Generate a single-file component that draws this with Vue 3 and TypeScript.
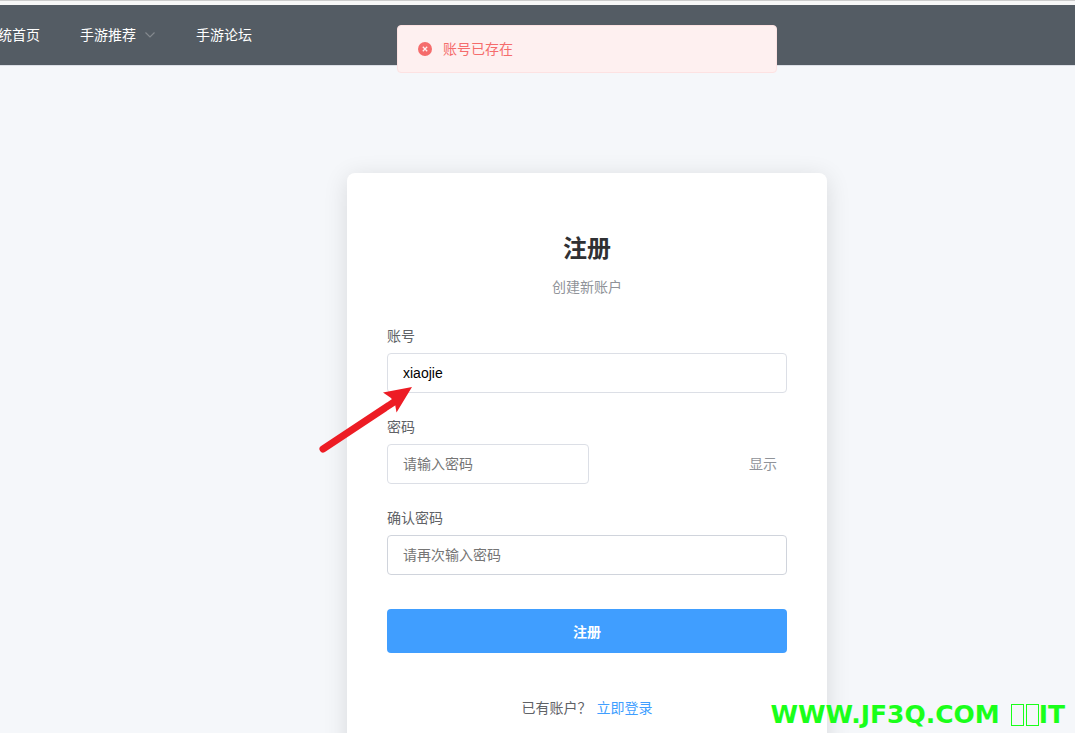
<script setup lang="ts">
import { ref } from 'vue'

const account = ref('xiaojie')
const password = ref('')
const confirmPassword = ref('')
const showPassword = ref(false)
</script>

<template>
  <div class="page">
    <div class="strip"></div>
    <header class="navbar">
      <nav class="menu">
        <a href="#" class="menu-item">统首页</a>
        <a href="#" class="menu-item">
          手游推荐
          <svg class="chevron" viewBox="0 0 12 12" aria-hidden="true">
            <path d="M1.500 3.500 6 8l4.500-4.500" fill="none" stroke="#858a8f" stroke-width="1.100" />
          </svg>
        </a>
        <a href="#" class="menu-item">手游论坛</a>
      </nav>
    </header>

    <main class="content">
      <div class="message" role="alert">
        <svg class="message-icon" viewBox="0 0 14 14" aria-hidden="true">
          <circle cx="7" cy="7" r="7" fill="#f56c6c" />
          <path d="m4.800 4.800 4.400 4.400m0-4.400-4.400 4.400" stroke="#fef0f0" stroke-width="1.300" />
        </svg>
        <span>账号已存在</span>
      </div>

      <form class="card" @submit.prevent>
        <h1 class="title">注册</h1>
        <p class="subtitle">创建新账户</p>

        <div class="field">
          <label for="account">账号</label>
          <input id="account" v-model="account" class="full" type="text" placeholder="请输入账号" />
        </div>

        <div class="field">
          <label for="password">密码</label>
          <div class="password-row">
            <input
              id="password"
              v-model="password"
              class="short"
              :type="showPassword ? 'text' : 'password'"
              placeholder="请输入密码"
            />
            <button type="button" class="toggle" @click="showPassword = !showPassword">
              {{ showPassword ? '隐藏' : '显示' }}
            </button>
          </div>
        </div>

        <div class="field">
          <label for="confirm">确认密码</label>
          <input
            id="confirm"
            v-model="confirmPassword"
            class="full strong"
            type="password"
            placeholder="请再次输入密码"
          />
        </div>

        <button type="submit" class="submit">注册</button>

        <p class="login">
          <span>已有账户？</span>
          <a href="#">立即登录</a>
        </p>

        <svg class="arrow" viewBox="0 0 96 70" aria-hidden="true">
          <path d="M5 64 76 17" stroke="#ed1c24" stroke-width="7" stroke-linecap="round" />
          <path d="M94 2 65 7.500 73 13 77 19 78.500 27.500Z" fill="#ed1c24" />
        </svg>
      </form>
    </main>

    <div class="watermark">
      <span>WWW.JF3Q.COM</span>
      <span class="boxes"><i></i><i></i></span>
      <span>IT</span>
    </div>
  </div>
</template>

<style>
html,
body {
  overflow: hidden;
}
</style>

<style scoped>
.page {
  position: relative;
  height: 100vh;
  overflow: hidden;
  background: #f5f7fa;
  color: #606266;
  font-family: "Liberation Sans", "Noto Sans CJK SC", sans-serif;
  font-size: 14px;
  line-height: 20px;
}

.page * {
  box-sizing: border-box;
}

.strip {
  height: 5px;
  border-top: 1px solid #cccccc;
  background: #f7f7f7;
}

.navbar {
  height: 61px;
  border-bottom: 1px solid #dcdfe6;
  background: #545c64;
}

.menu {
  display: flex;
  align-items: center;
  gap: 40px;
  height: 60px;
  margin-left: -2px;
}

.menu-item {
  display: flex;
  align-items: center;
  gap: 8px;
  color: #ffffff;
  text-decoration: none;
  white-space: nowrap;
}

.chevron {
  width: 12px;
  height: 12px;
}

/* The content column is centred beside a fixed left gutter. */
.content {
  display: flex;
  justify-content: center;
  padding: 107px 0 0 99px;
}

.message {
  position: absolute;
  top: 25px;
  z-index: 2;
  display: flex;
  align-items: center;
  gap: 11px;
  width: 380px;
  height: 48px;
  padding: 0 20px;
  border: 1px solid #fde2e2;
  border-radius: 4px;
  background: #fef0f0;
  color: #f56c6c;
}

.message-icon {
  width: 14px;
  height: 14px;
}

.card {
  position: relative;
  width: 480px;
  padding: 56px 40px 40px;
  border-radius: 8px;
  background: #ffffff;
  box-shadow: 0 4px 24px rgba(0, 0, 0, 0.12);
}

.title {
  margin: 0;
  color: #303133;
  font-size: 24px;
  line-height: 40px;
  text-align: center;
}

.subtitle {
  margin: 8px 0 29px;
  color: #909399;
  text-align: center;
}

.field {
  margin-bottom: 24px;
}

.field label {
  display: block;
  width: max-content;
  margin-bottom: 7px;
}

input {
  display: block;
  height: 40px;
  padding: 0 15px;
  border: 1px solid #dcdfe6;
  border-radius: 4px;
  outline: none;
  background: #ffffff;
  color: #000000;
  font-family: inherit;
  font-size: 14px;
}

input::placeholder {
  color: #757575;
}

.full {
  width: 100%;
}

.strong {
  border-color: #d0d4dc;
}

.short {
  width: 202px;
}

.password-row {
  display: flex;
  align-items: center;
  justify-content: space-between;
}

.toggle {
  padding: 0 10px;
  border: 0;
  background: none;
  color: #909399;
  font-family: inherit;
  font-size: 14px;
  line-height: 20px;
}

.submit {
  width: 100%;
  height: 44px;
  margin-top: 10px;
  border: 0;
  border-radius: 4px;
  background: #409eff;
  color: #ffffff;
  font-family: inherit;
  font-size: 14px;
  font-weight: 700;
}

.login {
  display: flex;
  justify-content: center;
  gap: 5px;
  margin: 45px 0 0;
}

.login a {
  color: #409eff;
  text-decoration: none;
}

.arrow {
  position: absolute;
  top: 212px;
  left: -29px;
  width: 96px;
  height: 70px;
  pointer-events: none;
}

.watermark {
  position: absolute;
  right: 10px;
  bottom: 2px;
  z-index: 3;
  display: flex;
  align-items: center;
  color: #1aff1a;
  font-family: "DejaVu Sans", sans-serif;
  font-size: 25px;
  font-weight: 700;
  line-height: 32px;
}

.boxes {
  display: flex;
  gap: 2px;
  margin-left: 11px;
}

.boxes i {
  width: 13px;
  height: 22px;
  border: 1px solid #1aff1a;
}
</style>
